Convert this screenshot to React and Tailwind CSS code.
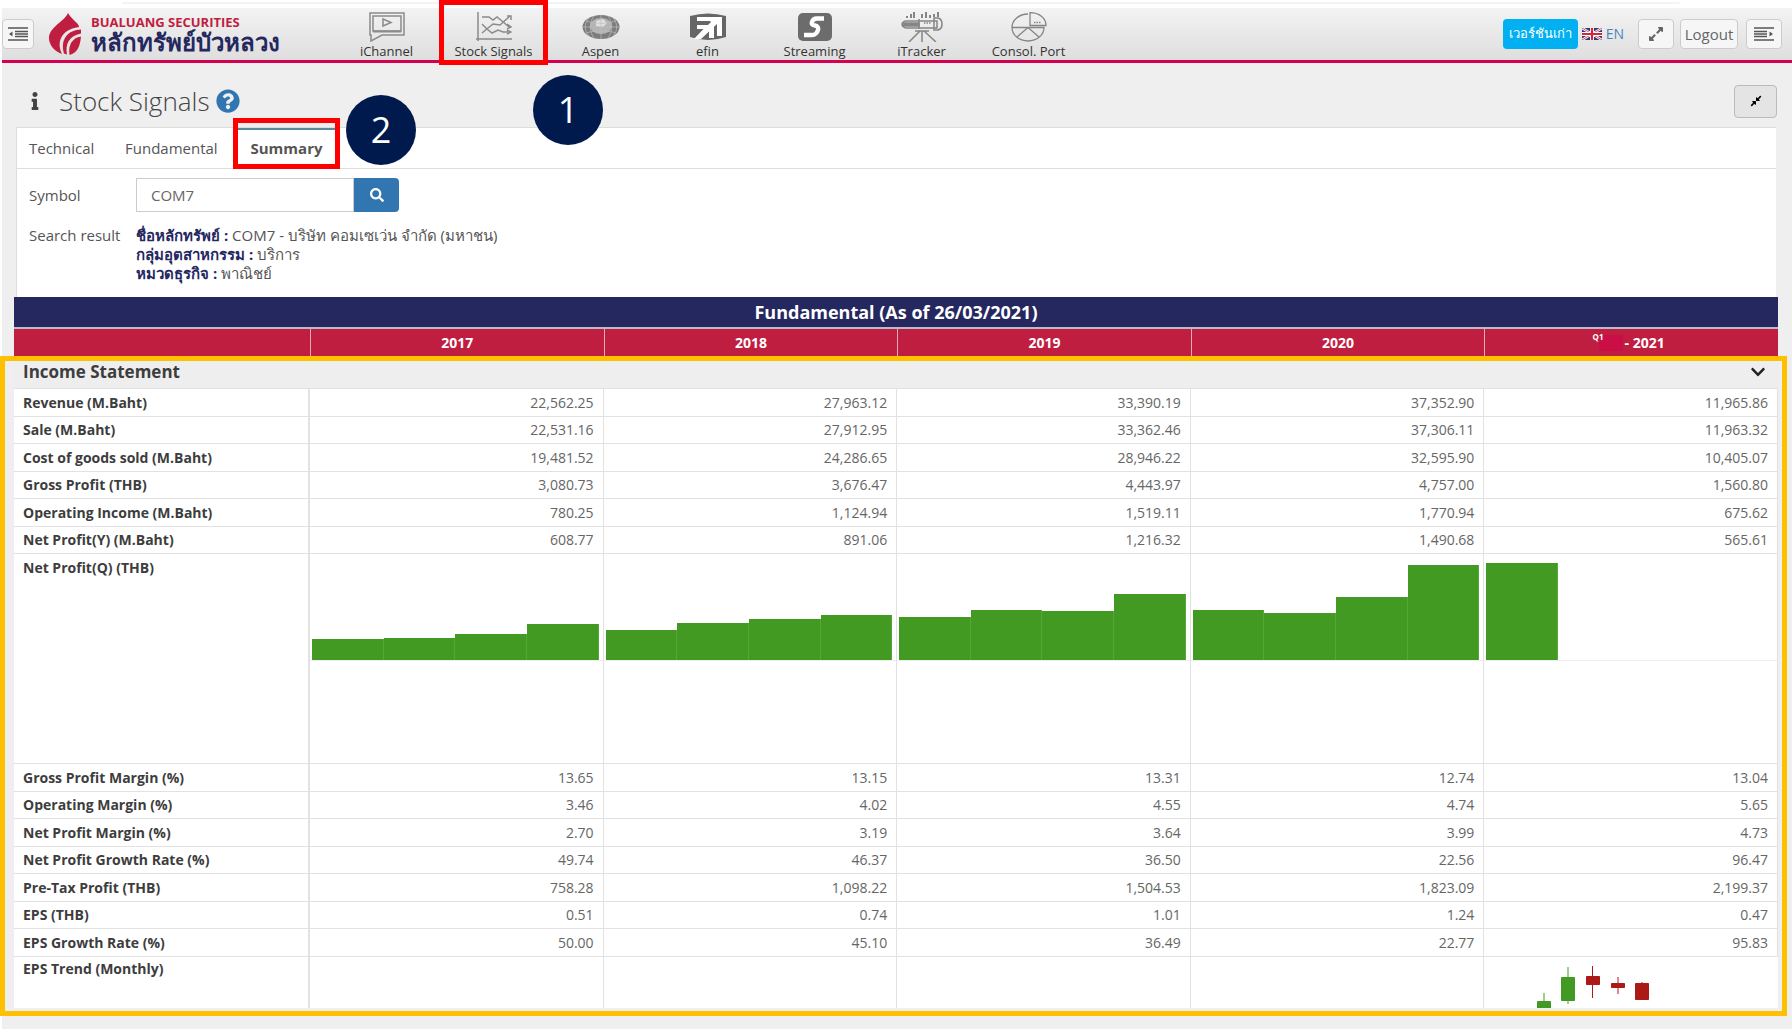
import React from 'react';
import { FaInfo, FaQuestionCircle, FaSearch, FaExpandAlt, FaCompressAlt, FaChevronDown } from 'react-icons/fa';

const years = ['2017', '2018', '2019', '2020'];

const topRows = [
  ['Revenue (M.Baht)', '22,562.25', '27,963.12', '33,390.19', '37,352.90', '11,965.86'],
  ['Sale (M.Baht)', '22,531.16', '27,912.95', '33,362.46', '37,306.11', '11,963.32'],
  ['Cost of goods sold (M.Baht)', '19,481.52', '24,286.65', '28,946.22', '32,595.90', '10,405.07'],
  ['Gross Profit (THB)', '3,080.73', '3,676.47', '4,443.97', '4,757.00', '1,560.80'],
  ['Operating Income (M.Baht)', '780.25', '1,124.94', '1,519.11', '1,770.94', '675.62'],
  ['Net Profit(Y) (M.Baht)', '608.77', '891.06', '1,216.32', '1,490.68', '565.61'],
];

const bottomRows = [
  ['Gross Profit Margin (%)', '13.65', '13.15', '13.31', '12.74', '13.04'],
  ['Operating Margin (%)', '3.46', '4.02', '4.55', '4.74', '5.65'],
  ['Net Profit Margin (%)', '2.70', '3.19', '3.64', '3.99', '4.73'],
  ['Net Profit Growth Rate (%)', '49.74', '46.37', '36.50', '22.56', '96.47'],
  ['Pre-Tax Profit (THB)', '758.28', '1,098.22', '1,504.53', '1,823.09', '2,199.37'],
  ['EPS (THB)', '0.51', '0.74', '1.01', '1.24', '0.47'],
  ['EPS Growth Rate (%)', '50.00', '45.10', '36.49', '22.77', '95.83'],
];

// bar heights per quarter, in px above the zero line
const quarters = [
  [21, 22, 26, 36],
  [30, 37, 41, 45],
  [43, 50, 49, 66],
  [50, 47, 63, 95],
  [97],
];

const labelCell = 'border-b border-r-2 border-[#e2e2e2] pl-[9px] text-left align-middle text-sm leading-5 font-bold text-[#3d3d3d]';
const valueCell = 'border-b border-r border-[#e2e2e2] pr-[9px] text-right align-middle text-sm leading-5 text-[#666]';
const headCell = 'border-l border-[#e9a9b6] bg-[#c01e41] text-center text-sm leading-5 font-bold text-white';
const toolButton = 'flex h-[30px] items-center justify-center rounded-sm border border-[#ccc] bg-[#f6f6f6] text-[#666]';

function Logo() {
  return (
    <a href="#home" className="flex items-center gap-2.5">
      <svg width="32" height="42" viewBox="0 0 32 42" fill="#c01e41">
        <path d="M19 0C15 9 0 14 0 25C0 32 5 38 13 41C8 31 10 17 30 14C30 10 23 7 19 0Z" />
        <path d="M32 16.500C19 17 11 26 15 40.500L18 41.500C16 31 20 23 32 20.500Z" />
        <path d="M32 23.500C23 25 19 32 20.500 42C28 40 31 34 32 23.500Z" />
      </svg>
      <span className="flex flex-col font-bold whitespace-nowrap">
        <span className="text-[13px] leading-4 text-[#c01e41]">BUALUANG SECURITIES</span>
        <span className="text-2xl leading-6 text-[#25285f]">หลักทรัพย์บัวหลวง</span>
      </span>
    </a>
  );
}

function ChannelIcon() {
  return (
    <svg width="36" height="30" viewBox="0 0 36 30" fill="none" stroke="#8b8b8b" strokeWidth="1.500">
      <path d="M1 1H35V23H13L2 29V23H1Z" />
      <path d="M4 4H32V19H4Z" />
      <path d="M14 7V14L22 10.500Z" />
      <path d="M4 19.500H32" strokeWidth="2" />
    </svg>
  );
}

function SignalsIcon() {
  return (
    <svg width="36" height="30" viewBox="0 0 36 30" fill="none" stroke="#8b8b8b" strokeWidth="1.500">
      <path d="M2 0V29M0 27H36" />
      <path d="M6 5H13L17 8L21 5L26 9L33 15H35" />
      <path d="M6 12L11 17L16 21L22 18L27 20H34" />
      <path d="M6 21L12 16L17 12L24 13L34 4" />
      <path d="M31 4H35V8M31 12L35 15L31 17M31 18L35 20L31 22" />
    </svg>
  );
}

function AspenIcon() {
  return (
    <svg width="38" height="26" viewBox="0 0 38 26">
      <ellipse cx="19" cy="13" rx="18.500" ry="12" fill="#7d7d7d" />
      <ellipse cx="19" cy="12" rx="11" ry="8" fill="#b4b4b4" />
      <path d="M14 7L21 5L25 9L21 13L14 12Z" fill="#e0e0e0" />
      <path d="M1 13H37M4 7C14 10 25 10 34 7M4 19C14 16 25 16 34 19M19 1V25M12 2C7 9 7 17 12 24M26 2C31 9 31 17 26 24M7 4C2 10 2 16 7 22M31 4C36 10 36 16 31 22" fill="none" stroke="#bdbdbd" strokeWidth=".7" />
    </svg>
  );
}

function EfinIcon() {
  return (
    <svg width="36" height="28" viewBox="0 0 36 28">
      <path d="M0 3Q18 -2 36 3V24Q18 30 0 24Z" fill="#666" />
      <path d="M6 4H32V23H27V12L12 26H5L19 12H14V21" fill="none" />
      <path d="M7 4H32V23H27V11L11 26H4L21 8H7Z" fill="#fff" />
      <path d="M7 12H24V25H19V16H7Z" fill="#fff" />
      <path d="M7 9H21L18 12H7Z" fill="#666" />
    </svg>
  );
}

function StreamingIcon() {
  return (
    <svg width="34" height="28" viewBox="0 0 34 28">
      <rect width="34" height="28" rx="5" fill="#6c6c6c" />
      <path d="M26 5.500H19Q15 5.500 14 9Q13 12 17 12.500Q21 13.500 20 17Q18.500 22 14 22H6" fill="none" stroke="#fff" strokeWidth="4.500" strokeLinejoin="round" />
    </svg>
  );
}

function TrackerIcon() {
  return (
    <svg width="42" height="30" viewBox="0 0 42 30" fill="none" stroke="#858585" strokeWidth="1.500">
      <path d="M5 9H36V16H5Q1 15 1 12Q2 9 5 9ZM18 7V17M33 6H37Q41 7 41 12Q41 17 37 18H33Z" />
      <path d="M2 11H18V14H2Z" fill="#858585" />
      <path d="M6 6V4M10 6V2M13 6V0M21 6V2M25 6V0M29 6V3M33 5V2M37 5V0" strokeWidth="2" />
      <path d="M14 19H28M21 19V30M19 19L8 30M23 19L35 30" />
      <path d="M23 11H30" strokeDasharray="1.500 1" />
    </svg>
  );
}

function PortfolioIcon() {
  return (
    <svg width="36" height="30" viewBox="0 0 36 30" fill="none" stroke="#858585" strokeWidth="1.300">
      <path d="M17 2C8 2 1 8 1 15.500C1 23 8 29 17 29C26 29 33 23 33 15.500H17" />
      <path d="M19 .7C28 .7 35 6 35 13.500H19Z" />
      <path d="M17 15.500L6 25M17 15.500L28 25M17 15.500H1" />
      <path d="M23 10.500H30" strokeDasharray="1.500 1" />
    </svg>
  );
}

function ListIcon({ flip }) {
  return (
    <svg width="20" height="14" viewBox="0 0 20 14" stroke="#555" strokeWidth="1.600">
      <path d="M0 1H20M0 13H20" />
      <path d={flip ? 'M0 4.500H13M0 7H13M0 9.500H13' : 'M7 4.500H20M7 7H20M7 9.500H20'} />
      <path d={flip ? 'M15.500 4.500V9.500L19 7Z' : 'M4.500 4.500V9.500L1 7Z'} fill="#555" stroke="none" />
    </svg>
  );
}

function Flag() {
  return (
    <svg width="20" height="12" viewBox="0 0 20 12">
      <rect width="20" height="12" fill="#2b3a7d" />
      <path d="M0 0L20 12M20 0L0 12" stroke="#fff" strokeWidth="2.400" />
      <path d="M0 0L20 12M20 0L0 12" stroke="#d0283c" strokeWidth=".8" />
      <path d="M10 0V12M0 6H20" stroke="#fff" strokeWidth="4" />
      <path d="M10 0V12M0 6H20" stroke="#d0283c" strokeWidth="2.200" />
    </svg>
  );
}

const apps = [
  { name: 'iChannel', Icon: ChannelIcon },
  { name: 'Stock Signals', Icon: SignalsIcon, step: '1' },
  { name: 'Aspen', Icon: AspenIcon },
  { name: 'efin', Icon: EfinIcon },
  { name: 'Streaming', Icon: StreamingIcon },
  { name: 'iTracker', Icon: TrackerIcon },
  { name: 'Consol. Port', Icon: PortfolioIcon },
];

function Header() {
  return (
    <header className="flex h-[55px] items-center border-b-3 border-[#d50052] bg-linear-to-b from-[#f3f3f3] to-[#dedede]">
      <button type="button" aria-label="Toggle menu" className={`${toolButton} w-8`}>
        <ListIcon />
      </button>
      <div className="w-[299px] shrink-0 pl-[15px]">
        <Logo />
      </div>

      <nav className="flex">
        {apps.map(({ name, Icon, step }) => (
          <a key={name} href={`#${name}`} className="relative flex h-[52px] w-[107px] flex-col items-center pt-[3px] text-[13px] leading-4 text-[#333]">
            <span className="flex h-8 items-center">
              <Icon />
            </span>
            <span>{name}</span>
            {step && (
              <>
                <span className="absolute -inset-x-px -top-2 -bottom-[5px] border-5 border-[#ff0000]" />
                <span className="absolute top-[67px] left-[93px] flex h-[70px] w-[70px] items-center justify-center rounded-full bg-[#001a4d] text-4xl text-white">{step}</span>
              </>
            )}
          </a>
        ))}
      </nav>

      <div className="ml-auto flex items-center pr-2.5">
        <button type="button" className="h-[30px] w-[75px] rounded-sm bg-[#00b0f0] text-[13px] whitespace-nowrap text-white">เวอร์ชันเก่า</button>
        <a href="#en" className="ml-1 flex items-center gap-1 text-sm text-[#4a86bd]">
          <Flag />
          EN
        </a>
        <button type="button" aria-label="Full screen" className={`${toolButton} ml-3.5 w-9`}>
          <FaExpandAlt className="h-4 w-4" />
        </button>
        <button type="button" className={`${toolButton} ml-1.5 w-[58px] text-[15px]`}>Logout</button>
        <button type="button" aria-label="Toggle side panel" className={`${toolButton} ml-2 w-9`}>
          <ListIcon flip />
        </button>
      </div>
    </header>
  );
}

function DataRows({ rows }) {
  return rows.map(([label, ...values]) => (
    <tr key={label} className="h-7 even:h-[27px]">
      <th scope="row" className={labelCell}>{label}</th>
      {values.map((value, i) => (
        <td key={i} className={valueCell}>{value}</td>
      ))}
    </tr>
  ));
}

function FundamentalTable() {
  return (
    <div className="relative mr-3.5 ml-3">
      <table className="w-full table-fixed border-separate border-spacing-0 bg-white">
        <colgroup>
          <col className="w-[296px]" />
          <col />
          <col />
          <col />
          <col />
          <col />
        </colgroup>
        <thead>
          <tr className="h-8">
            <th colSpan={6} className="border-b-2 border-[#b9bacb] bg-[#25285f] text-center text-lg leading-5 font-bold text-white">
              Fundamental (As of 26/03/2021)
            </th>
          </tr>
          <tr className="h-[27px]">
            <th className="bg-[#c01e41]" />
            {years.map((year) => (
              <th key={year} scope="col" className={headCell}>{year}</th>
            ))}
            <th scope="col" className={headCell}>
              <span className="flex items-center justify-center gap-0.5">
                <span className="relative h-4 w-6 bg-[#c90f45]">
                  <span className="absolute -top-0.5 -left-1.5 text-[8px] leading-2">Q1</span>
                </span>
                - 2021
              </span>
            </th>
          </tr>
        </thead>
        <tbody>
          <tr className="h-[33px]">
            <th colSpan={6} scope="colgroup" className="border-b border-[#e2e2e2] bg-[#eee] pr-3 pl-[9px] text-left text-[17px] leading-5 text-[#3d3d3d]">
              <span className="flex items-center justify-between">
                Income Statement
                <button type="button" aria-label="Collapse income statement">
                  <FaChevronDown className="h-4 w-4 text-[#222]" />
                </button>
              </span>
            </th>
          </tr>
        </tbody>
        <tbody>
          <DataRows rows={topRows} />
        </tbody>
        <tbody>
          <tr>
            <th scope="row" className={`${labelCell} pt-1 align-top!`}>Net Profit(Q) (THB)</th>
            {quarters.map((bars, i) => (
              <td key={i} className="border-r border-b border-[#e2e2e2] p-0 align-top">
                <div className="mb-[102px] grid h-[107px] grid-cols-4 items-end border-b border-[#eee] pr-1 pl-[2px]">
                  {bars.map((height, q) => (
                    <div key={q} className="border-r border-[#55a73a] bg-[#439a23]" style={{ height }} />
                  ))}
                </div>
              </td>
            ))}
          </tr>
        </tbody>
        <tbody>
          <DataRows rows={bottomRows} />
        </tbody>
        <tbody>
          <tr className="h-[51px]">
            <th scope="row" className={`${labelCell} border-b-0 pt-0.5 align-top!`}>EPS Trend (Monthly)</th>
            {years.map((year) => (
              <td key={year} className="border-r border-[#e2e2e2]" />
            ))}
            <td className="p-0 align-bottom">
              <svg className="block w-full" height="50" viewBox="0 0 293 50" preserveAspectRatio="xMinYMin">
                <g fill="#439a23" stroke="#439a23">
                  <path d="M60 35V50M84 9V46" />
                  <path d="M53.500 43.500H66.500V50H53.500ZM77.500 19.500H90.500V42.500H77.500Z" />
                </g>
                <g fill="#ab1a17" stroke="#ab1a17">
                  <path d="M108.500 8V40M134 19V36M158 24V30" />
                  <path d="M102.500 18.500H115.500V26.500H102.500ZM127.500 25.500H140.500V29.500H127.500ZM151.500 25.500H164.500V41.500H151.500Z" />
                </g>
              </svg>
            </td>
          </tr>
        </tbody>
      </table>
      {/* frame round the income statement */}
      <div className="pointer-events-none absolute top-[59px] -right-[9px] -bottom-2 -left-3.5 border-5 border-[#ffc000]" />
    </div>
  );
}

export default function App() {
  return (
    <div className="min-h-screen bg-white pl-0.5 font-['Open_Sans','Noto_Sans',sans-serif] text-[15px] text-[#555]">
      <div className="flex h-2 pt-0.5">
        <div className="mr-28 ml-30 h-0.5 flex-1 rounded-b bg-[#f1f3f4]" />
      </div>
      <div className="min-h-[calc(100vh-8px)] bg-[#efefef]">
        <Header />

        <div className="flex h-16 items-center pt-3 pr-[15px] pl-[27px]">
          <FaInfo className="h-[18px] w-3 text-[#444]" />
          <h1 className="ml-[18px] text-[26px] leading-8 font-light text-[#444]">Stock Signals</h1>
          <FaQuestionCircle className="ml-1.5 h-6 w-6 text-[#3276b1]" />
          <button type="button" aria-label="Collapse" className="ml-auto flex h-[33px] w-[43px] items-center justify-center rounded-sm border border-[#bbb] bg-[#e4e4e4] text-black">
            <FaCompressAlt className="h-3 w-3" />
          </button>
        </div>

        <main>
          <section className="mr-4 ml-3.5 h-[170px] border-t border-l border-[#ddd] bg-white">
            <div className="flex h-[41px] border-b border-[#ddd] leading-10">
              <a href="#technical" className="w-24 pl-3">Technical</a>
              <a href="#fundamental" className="w-[123px] pl-3">Fundamental</a>
              <a href="#summary" className="relative w-[101px] border-t-2 border-[#57889c] text-center leading-9 font-bold">
                Summary
                <span className="absolute -inset-x-[3px] -top-3 -bottom-px border-5 border-[#ff0000]" />
                <span className="absolute -top-[35px] left-[110px] flex h-[70px] w-[70px] items-center justify-center rounded-full bg-[#001a4d] text-4xl font-normal text-white">2</span>
              </a>
            </div>

            <div className="flex items-center pt-[9px] pl-3">
              <label htmlFor="symbol" className="w-[107px]">Symbol</label>
              <input id="symbol" defaultValue="COM7" className="h-[34px] w-[218px] border border-[#ccc] pl-3.5 text-[15px] text-[#666] outline-none" />
              <button type="button" aria-label="Search" className="flex h-[34px] w-[45px] items-center justify-center rounded-r-sm bg-[#3276b1] text-white">
                <FaSearch className="h-3.5 w-3.5" />
              </button>
            </div>

            <div className="flex pt-3.5 pl-3 leading-[19px]">
              <div className="w-[107px]">Search result</div>
              <div>
                <p><b className="text-[#25285f]">ชื่อหลักทรัพย์ :</b> COM7 - บริษัท คอมเซเว่น จำกัด (มหาชน)</p>
                <p><b className="text-[#25285f]">กลุ่มอุตสาหกรรม :</b> บริการ</p>
                <p><b className="text-[#25285f]">หมวดธุรกิจ :</b> พาณิชย์</p>
              </div>
            </div>
          </section>

          <FundamentalTable />
        </main>
      </div>
    </div>
  );
}
